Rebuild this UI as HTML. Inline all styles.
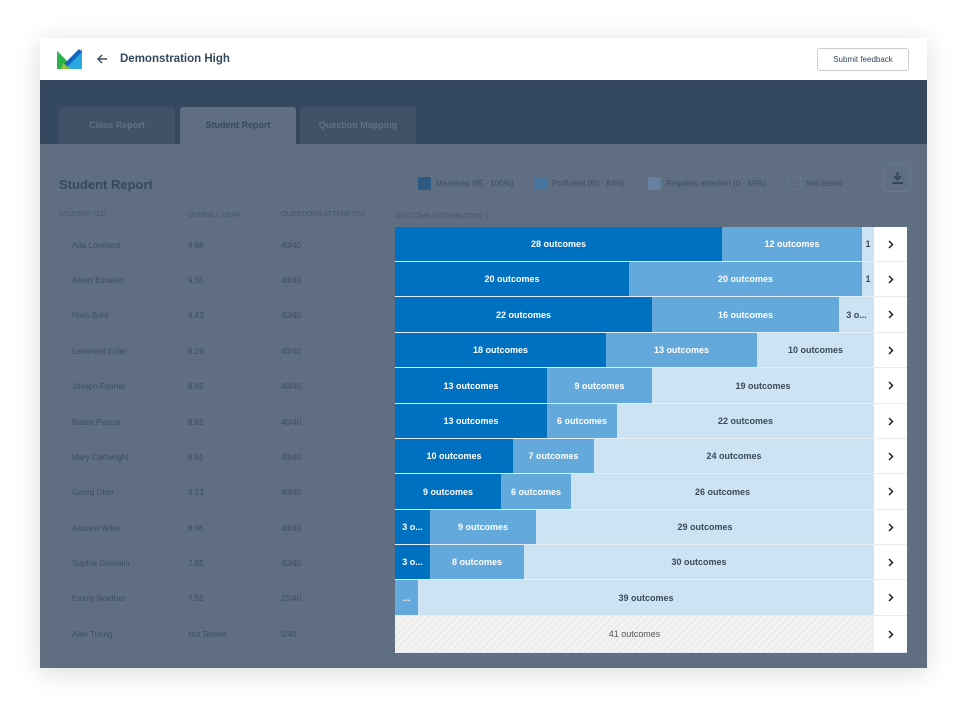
<!DOCTYPE html>
<html><head><style>
*{margin:0;padding:0;box-sizing:border-box}
body{width:968px;height:711px;background:#fff;font-family:"Liberation Sans",sans-serif;position:relative;overflow:hidden}
.card{position:absolute;left:40px;top:38px;width:887px;height:630px;background:#5f6e81;box-shadow:0 4px 24px rgba(0,0,0,.15)}
.hdr{position:absolute;left:0;top:0;width:887px;height:42px;background:#fff}
.band{position:absolute;left:0;top:42px;width:887px;height:64px;background:#34495f}
.tab{position:absolute;top:69px;height:37px;width:116px;background:#3f5268;color:#5f7186;font-size:9px;font-weight:bold;text-align:center;line-height:37px;border-radius:3px 3px 0 0}
.t{position:absolute;color:#3d4e62;font-size:8px;white-space:nowrap}
.h{position:absolute;color:#46576b;font-size:7px;white-space:nowrap}
.row{position:absolute;left:395px;width:512px;display:flex;background:#fff}
.s{height:100%;font-size:9px;font-weight:bold;display:flex;align-items:center;justify-content:center;overflow:hidden;white-space:nowrap}
.d{background:#0070c0;color:#fff}.m{background:#64a9dc;color:#fff}.l{background:#cce3f3;color:#3a4a5a}
.ch{position:absolute;right:0;width:33px;height:100%;background:#fff;display:flex;align-items:center;justify-content:center}
.sq{position:absolute;width:13px;height:13px;border-radius:2px;top:139px}
</style></head><body>
<div class="card">
<div class="hdr">
<svg style="position:absolute;left:17px;top:11px" width="25" height="20" viewBox="0 0 25 20"><path d="M0 2 L8 10 L8 20 L0 20Z" fill="#1a9e4a"/><path d="M0 2 L12 14 L10 20 L0 20Z" fill="#2db34a"/><path d="M25 0 L25 20 L8 20Z" fill="#2aa9e0"/><path d="M22 0 L25 3 L10 18 L7 15Z" fill="#1565c0"/><path d="M6 14 L14 20 L4 20Z" fill="#8cc63f"/></svg>
<svg style="position:absolute;left:57px;top:16px" width="11" height="10" viewBox="0 0 11 10"><path d="M10 5H1.5M5 1L1 5l4 4" fill="none" stroke="#34495f" stroke-width="1.4"/></svg>
<div style="position:absolute;left:80px;top:15px;font-size:11.5px;font-weight:bold;color:#34495f">Demonstration High</div>
<div style="position:absolute;left:777px;top:10px;width:92px;height:23px;border:1px solid #ccd;border-radius:3px;font-size:8px;color:#34495f;text-align:center;line-height:21px">Submit feedback</div>
</div>
<div class="band"></div>
<div class="tab" style="left:19px">Class Report</div>
<div class="tab" style="left:140px;background:#5f6e81;color:#34495f">Student Report</div>
<div class="tab" style="left:260px">Question Mapping</div>
<div style="position:absolute;left:19px;top:139px;font-size:13px;font-weight:bold;color:#34495f">Student Report</div>
<div class="sq" style="left:378px;background:#2e5a82"></div><div class="t" style="left:396px;top:141px">Mastered (85 - 100%)</div>
<div class="sq" style="left:494px;background:#4a739b"></div><div class="t" style="left:512px;top:141px">Proficient (60 - 84%)</div>
<div class="sq" style="left:608px;background:#6880a0"></div><div class="t" style="left:626px;top:141px">Requires attention (0 - 59%)</div>
<div class="sq" style="left:748px;border:1px solid #66788c"></div><div class="t" style="left:766px;top:141px">Not tested</div>
<div style="position:absolute;left:843px;top:126px;width:28px;height:28px;border:1px solid #6a7a8d;border-radius:3px"><svg style="position:absolute;left:8px;top:7px" width="11" height="12" viewBox="0 0 11 12"><path d="M5.5 0v7M2 4l3.5 3.5L9 4" fill="none" stroke="#34495f" stroke-width="2"/><path d="M0 11h11" stroke="#34495f" stroke-width="2"/></svg></div>
<div class="h" style="left:19px;top:173px">STUDENT (12)</div>
<div class="h" style="left:148px;top:173px">OVERALL YEAR &#8964;</div>
<div class="h" style="left:241px;top:173px">QUESTIONS ATTEMPTED</div>
<div class="h" style="left:355px;top:173px">OUTCOME DISTRIBUTION &#9432;</div>
</div>
<div style="position:absolute;left:395px;top:227px;width:512px;height:426px;background:#e4ecf4"></div>
<div id="rows"></div>
<script>
var R=[["Ada Lovelace","9.68","40/40",[[327,"d","28 outcomes"],[140,"m","12 outcomes"],[12,"l","1"]]],
["Albert Einstein","9.55","40/40",[[234,"d","20 outcomes"],[233,"m","20 outcomes"],[12,"l","1"]]],
["Niels Bohr","9.43","40/40",[[257,"d","22 outcomes"],[187,"m","16 outcomes"],[35,"l","3 o..."]]],
["Leonhard Euler","9.19","40/40",[[211,"d","18 outcomes"],[151,"m","13 outcomes"],[117,"l","10 outcomes"]]],
["Joseph Fourier","8.85","40/40",[[152,"d","13 outcomes"],[105,"m","9 outcomes"],[222,"l","19 outcomes"]]],
["Blaise Pascal","8.62","40/40",[[152,"d","13 outcomes"],[70,"m","6 outcomes"],[257,"l","22 outcomes"]]],
["Mary Cartwright","8.51","40/40",[[118,"d","10 outcomes"],[81,"m","7 outcomes"],[280,"l","24 outcomes"]]],
["Georg Ohm","8.23","40/40",[[106,"d","9 outcomes"],[70,"m","6 outcomes"],[303,"l","26 outcomes"]]],
["Andrew Wiles","8.06","40/40",[[35,"d","3 o..."],[106,"m","9 outcomes"],[338,"l","29 outcomes"]]],
["Sophie Germain","7.85","40/40",[[35,"d","3 o..."],[94,"m","8 outcomes"],[350,"l","30 outcomes"]]],
["Emmy Noether","7.52","25/40",[[23,"m","..."],[456,"l","39 outcomes"]]],
["Alan Turing","Not Tested","0/40",null]];
var h="",ys=[227,262,297,333,368,404,439,474,510,545,580,616,653];
R.forEach(function(r,i){var y=ys[i],hh=ys[i+1]-y-1;
h+='<div class="t" style="left:72px;top:'+(y+14)+'px">'+r[0]+'</div><div class="t" style="left:188px;top:'+(y+14)+'px">'+r[1]+'</div><div class="t" style="left:281px;top:'+(y+14)+'px">'+r[2]+'</div>';
h+='<div class="row" style="top:'+y+'px;height:'+hh+'px">';
if(r[3])r[3].forEach(function(s){h+='<div class="s '+s[1]+'" style="width:'+s[0]+'px">'+s[2]+'</div>'});
else h+='<div class="s" style="width:479px;color:#555;font-weight:normal;background:repeating-linear-gradient(135deg,#f2f2f2 0 4px,#e6e6e6 4px 5px)">41 outcomes</div>';
h+='<div class="ch"><svg width="6" height="9" viewBox="0 0 6 9"><path d="M1 1l3.5 3.5L1 8" fill="none" stroke="#222" stroke-width="1.5"/></svg></div></div>';});
document.getElementById("rows").innerHTML=h;
</script>
</body></html>
